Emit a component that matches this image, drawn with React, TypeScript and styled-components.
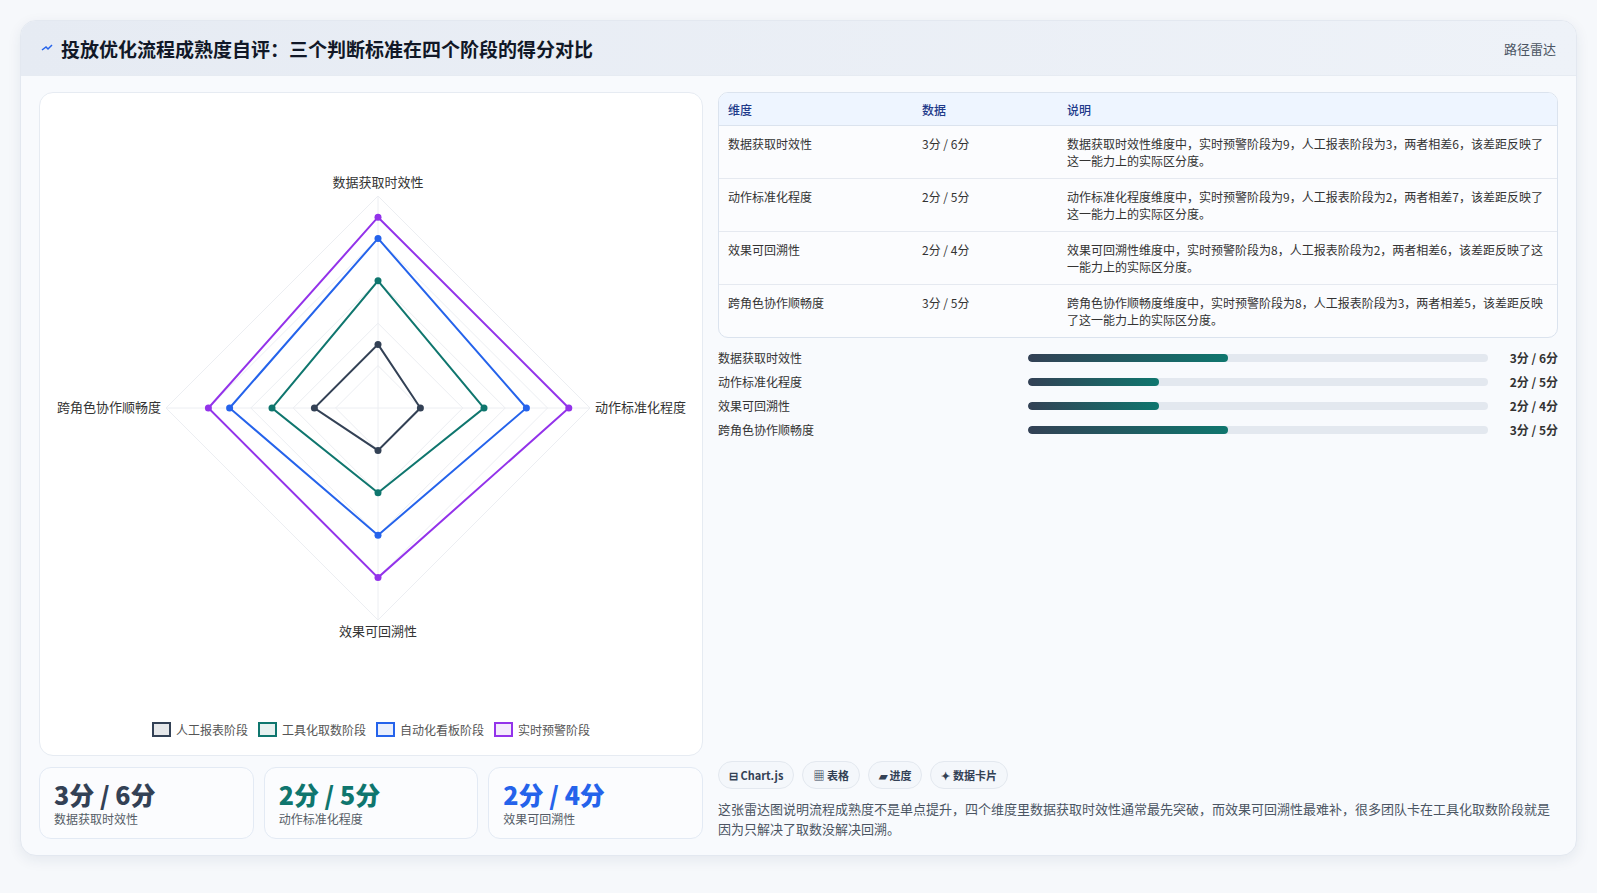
import React from 'react';
import styled, { createGlobalStyle } from 'styled-components';

const Global = createGlobalStyle`
  body { margin: 0; background: #f6f8fb; font-family: "Noto Sans CJK SC", "Noto Sans", sans-serif; }
`;

const Page = styled.div`
  padding: 20px 20px 20px 20px;
`;

const Card = styled.div`
  background: #f8fafd;
  border: 1px solid #e3e8f0;
  border-radius: 16px;
  box-shadow: 0 4px 14px rgba(30, 50, 90, 0.08);
  overflow: hidden;
  height: 836px;
  box-sizing: border-box;
  display: flex;
  flex-direction: column;
`;

const Header = styled.div`
  height: 54px;
  flex-shrink: 0;
  display: flex;
  align-items: center;
  justify-content: space-between;
  padding: 0 20px;
  background: linear-gradient(90deg, #e6ebf3, #eef2f8);
  border-bottom: 1px solid #e6ebf2;
`;

const Title = styled.h1`
  margin: 0;
  font-size: 19px;
  font-weight: 700;
  color: #111827;
  display: flex;
  align-items: center;
  gap: 8px;
`;

const Tag = styled.span`
  font-size: 13px;
  color: #4b5563;
`;

const Body = styled.div`
  flex: 1;
  display: grid;
  grid-template-columns: 664px 1fr;
  gap: 15px;
  padding: 16px 18px 17px 18px;
`;

const Col = styled.div`
  display: flex;
  flex-direction: column;
  min-height: 0;
`;

const ChartBox = styled.div`
  height: 664px;
  flex-shrink: 0;
  box-sizing: border-box;
  background: #fff;
  border: 1px solid #e6ebf2;
  border-radius: 14px;
  display: flex;
  flex-direction: column;
  align-items: center;
`;

const Legend = styled.div`
  display: flex;
  gap: 10px;
  font-size: 12px;
  color: #555;
  margin-top: -2px;
`;

const LegendItem = styled.span<{ $c: string; $f: string }>`
  display: flex;
  align-items: center;
  gap: 5px;
  &::before {
    content: '';
    width: 15px;
    height: 11px;
    border: 2px solid ${p => p.$c};
    background: ${p => p.$f};
  }
`;

const Stats = styled.div`
  display: grid;
  grid-template-columns: repeat(3, 1fr);
  gap: 10px;
  margin-top: 11px;
`;

const Stat = styled.div`
  height: 72px;
  box-sizing: border-box;
  border: 1px solid #e3eaf4;
  border-radius: 12px;
  background: #fbfcfe;
  padding: 10px 14px;
`;

const StatValue = styled.div<{ $c: string }>`
  font-size: 25px;
  font-weight: 800;
  color: ${p => p.$c};
  line-height: 32px;
`;

const StatLabel = styled.div`
  font-size: 12px;
  color: #555c66;
`;

const Table = styled.table`
  width: 100%;
  border-collapse: separate;
  border-spacing: 0;
  border: 1px solid #dbe3ee;
  border-radius: 10px;
  overflow: hidden;
  font-size: 12px;
  color: #333;
  background: #fbfcfe;
  th {
    background: #eef5ff;
    color: #1e3a8a;
    font-weight: 500;
    text-align: left;
    height: 32px;
    padding: 0 9px;
    border-bottom: 1px solid #dbe3ee;
  }
  td {
    vertical-align: top;
    padding: 9px 9px 0;
    height: 43px;
    line-height: 17px;
    border-bottom: 1px solid #e5e9f0;
  }
  tr:last-child td { border-bottom: none; }
`;

const Bars = styled.div`
  margin-top: 11px;
  display: flex;
  flex-direction: column;
  gap: 7px;
`;

const BarRow = styled.div`
  display: grid;
  grid-template-columns: 310px 1fr 70px;
  align-items: center;
  font-size: 12px;
  color: #333;
  height: 17px;
`;

const Track = styled.div`
  height: 8px;
  border-radius: 4px;
  background: #e3e8ef;
  overflow: hidden;
`;

const Fill = styled.div`
  height: 100%;
  border-radius: 4px;
  background: linear-gradient(90deg, #334155, #0f766e);
`;

const BarValue = styled.span`
  text-align: right;
  font-weight: 700;
`;

const Chips = styled.div`
  margin-top: auto;
  display: flex;
  gap: 8px;
`;

const Chip = styled.span`
  font-size: 11px;
  font-weight: 600;
  color: #334155;
  border: 1px solid #e3e8ef;
  background: #f4f7fb;
  border-radius: 14px;
  padding: 5px 10px;
`;

const Note = styled.p`
  margin: 10px 0 0;
  font-size: 13px;
  line-height: 20px;
  color: #4b5563;
`;

const labels = ['数据获取时效性', '动作标准化程度', '效果可回溯性', '跨角色协作顺畅度'];
const series = [
  { name: '人工报表阶段', c: '#334155', f: 'rgba(51,65,85,0.12)', d: [3, 2, 2, 3] },
  { name: '工具化取数阶段', c: '#0f766e', f: 'rgba(15,118,110,0.1)', d: [6, 5, 4, 5] },
  { name: '自动化看板阶段', c: '#2563eb', f: 'rgba(37,99,235,0.1)', d: [8, 7, 6, 7] },
  { name: '实时预警阶段', c: '#9333ea', f: 'rgba(147,51,234,0.1)', d: [9, 9, 8, 8] },
];

const CX = 338, CY = 315, U = 21.2;
const pt = (i: number, v: number) => {
  const a = -Math.PI / 2 + (i * Math.PI) / 2;
  return [CX + Math.cos(a) * v * U, CY + Math.sin(a) * v * U];
};

const Radar = () => (
  <svg width="662" height="630" viewBox="0 0 662 630">
    {[2, 4, 6, 8, 10].map(v => (
      <polygon key={v} points={[0, 1, 2, 3].map(i => pt(i, v).join(',')).join(' ')} fill="none" stroke="#eceef2" />
    ))}
    {[0, 1, 2, 3].map(i => {
      const [x, y] = pt(i, 10);
      return <line key={i} x1={CX} y1={CY} x2={x} y2={y} stroke="#eceef2" />;
    })}
    {series.map(s => (
      <g key={s.name}>
        <polygon points={s.d.map((v, i) => pt(i, v).join(',')).join(' ')} fill="none" stroke={s.c} strokeWidth="2" />
        {s.d.map((v, i) => {
          const [x, y] = pt(i, v);
          return <circle key={i} cx={x} cy={y} r="3.5" fill={s.c} />;
        })}
      </g>
    ))}
    <g fontSize="13" fill="#333" fontFamily='"Noto Sans CJK SC", sans-serif'>
      <text x={CX} y={94} textAnchor="middle">{labels[0]}</text>
      <text x={555} y={319} textAnchor="start">{labels[1]}</text>
      <text x={CX} y={543} textAnchor="middle">{labels[2]}</text>
      <text x={121} y={319} textAnchor="end">{labels[3]}</text>
    </g>
  </svg>
);

const rows = [
  ['数据获取时效性', '3分 / 6分', '数据获取时效性维度中，实时预警阶段为9，人工报表阶段为3，两者相差6，该差距反映了这一能力上的实际区分度。', 43.5],
  ['动作标准化程度', '2分 / 5分', '动作标准化程度维度中，实时预警阶段为9，人工报表阶段为2，两者相差7，该差距反映了这一能力上的实际区分度。', 28.5],
  ['效果可回溯性', '2分 / 4分', '效果可回溯性维度中，实时预警阶段为8，人工报表阶段为2，两者相差6，该差距反映了这一能力上的实际区分度。', 28.5],
  ['跨角色协作顺畅度', '3分 / 5分', '跨角色协作顺畅度维度中，实时预警阶段为8，人工报表阶段为3，两者相差5，该差距反映了这一能力上的实际区分度。', 43.5],
] as const;

export default function App() {
  return (
    <Page>
      <Global />
      <Card>
        <Header>
          <Title>
            <svg width="12" height="10" viewBox="0 0 12 10"><path d="M1 7 L5 4 L7 6 L11 2" stroke="#2563eb" strokeWidth="1.5" fill="none" /></svg>
            投放优化流程成熟度自评：三个判断标准在四个阶段的得分对比
          </Title>
          <Tag>路径雷达</Tag>
        </Header>
        <Body>
          <Col>
            <ChartBox>
              <Radar />
              <Legend>
                {series.map(s => <LegendItem key={s.name} $c={s.c} $f={s.f}>{s.name}</LegendItem>)}
              </Legend>
            </ChartBox>
            <Stats>
              <Stat><StatValue $c="#334155">3分 / 6分</StatValue><StatLabel>数据获取时效性</StatLabel></Stat>
              <Stat><StatValue $c="#0f766e">2分 / 5分</StatValue><StatLabel>动作标准化程度</StatLabel></Stat>
              <Stat><StatValue $c="#2563eb">2分 / 4分</StatValue><StatLabel>效果可回溯性</StatLabel></Stat>
            </Stats>
          </Col>
          <Col>
            <Table>
              <thead>
                <tr><th style={{ width: 176 }}>维度</th><th style={{ width: 127 }}>数据</th><th>说明</th></tr>
              </thead>
              <tbody>
                {rows.map(r => (
                  <tr key={r[0]}><td>{r[0]}</td><td>{r[1]}</td><td>{r[2]}</td></tr>
                ))}
              </tbody>
            </Table>
            <Bars>
              {rows.map(r => (
                <BarRow key={r[0]}>
                  <span>{r[0]}</span>
                  <Track><Fill style={{ width: `${r[3]}%` }} /></Track>
                  <BarValue>{r[1]}</BarValue>
                </BarRow>
              ))}
            </Bars>
            <Chips>
              <Chip>⊟ Chart.js</Chip>
              <Chip>▦ 表格</Chip>
              <Chip>▰ 进度</Chip>
              <Chip>✦ 数据卡片</Chip>
            </Chips>
            <Note>这张雷达图说明流程成熟度不是单点提升，四个维度里数据获取时效性通常最先突破，而效果可回溯性最难补，很多团队卡在工具化取数阶段就是因为只解决了取数没解决回溯。</Note>
          </Col>
        </Body>
      </Card>
    </Page>
  );
}
